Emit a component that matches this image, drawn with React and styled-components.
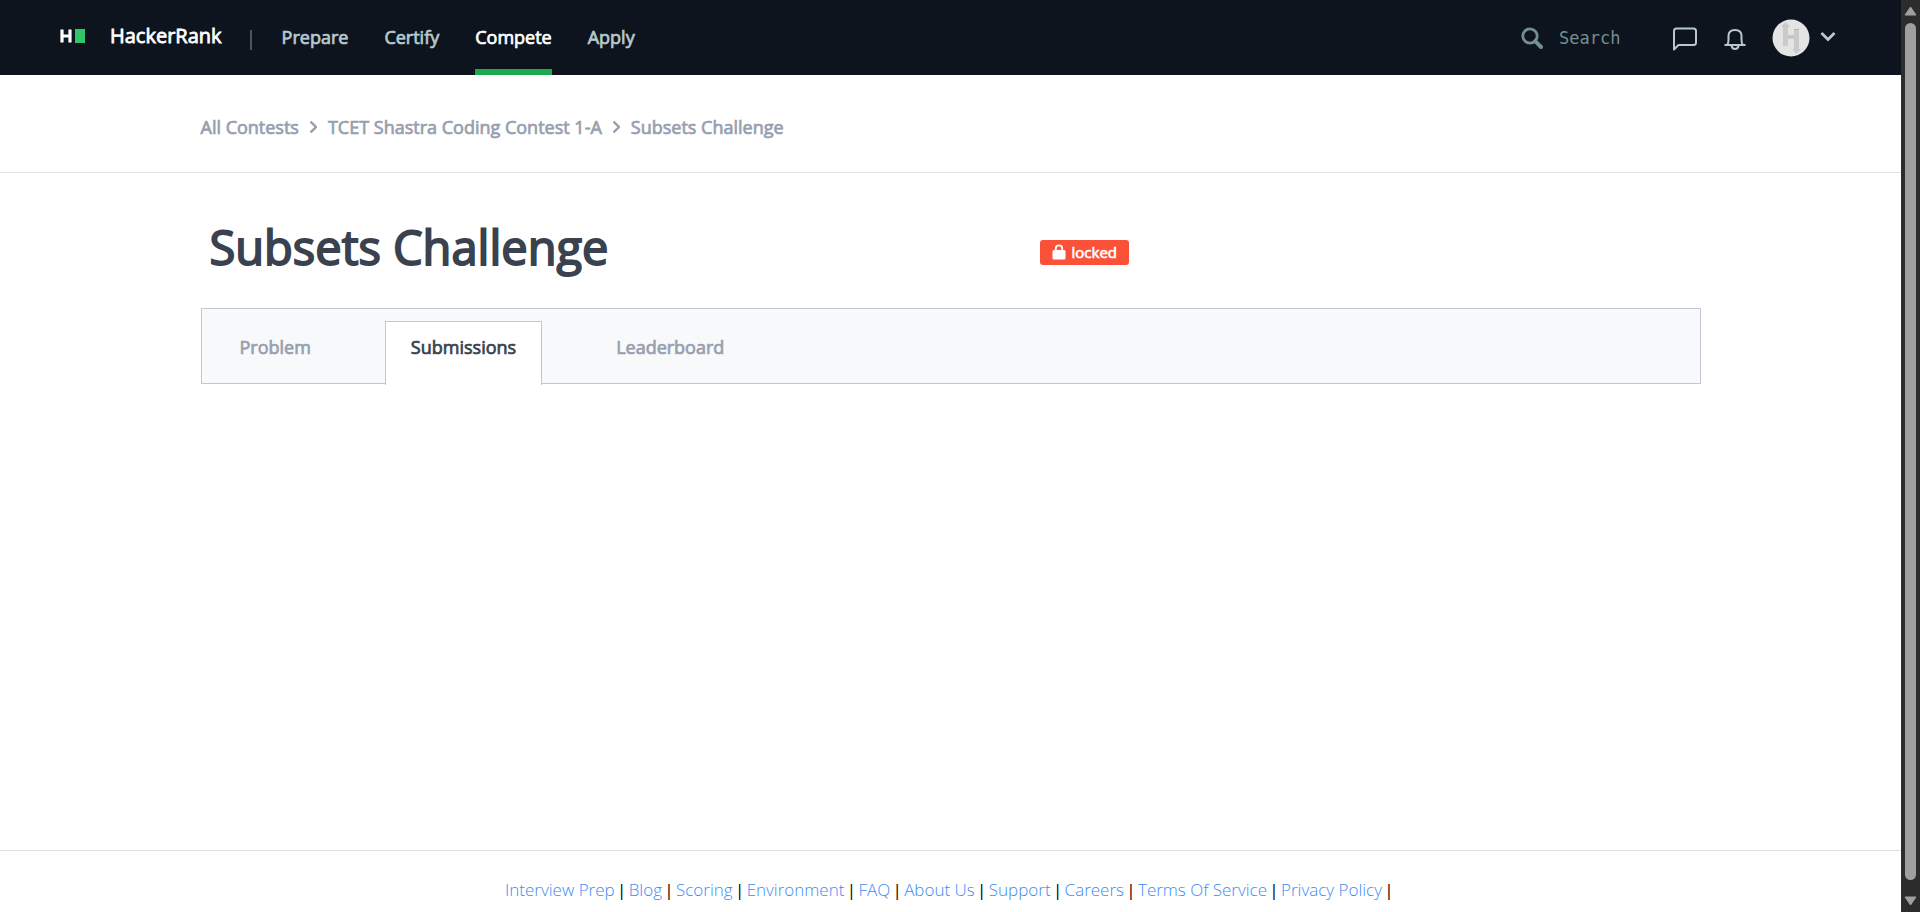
import React from "react";
import styled, { createGlobalStyle, css } from "styled-components";

const GlobalStyle = createGlobalStyle`
  *, *::before, *::after { box-sizing: border-box; }
  body {
    margin: 0;
    background: #fff;
    color: #39424e;
    font-family: "Open Sans", "Noto Sans", sans-serif;
    font-size: 18px;
    line-height: 24px;
  }
  a { color: inherit; text-decoration: none; }
  button { border: 0; padding: 0; background: none; color: inherit; font: inherit; cursor: pointer; }
`;

const thick = css`
  font-weight: 400;
  -webkit-text-stroke: 0.04em currentColor;
`;

const Window = styled.div`
  display: grid;
  grid-template-columns: minmax(0, 1fr) 19px;
  min-height: 100vh;
`;

const Page = styled.div`
  display: flex;
  flex-direction: column;
`;

const Header = styled.header`
  display: flex;
  align-items: stretch;
  justify-content: space-between;
  height: 75px;
  padding: 0 65px 0 60px;
  background: #0e141e;
  color: #b7c9cc;
`;

const HeaderGroup = styled.div`
  display: flex;
  align-items: center;
`;

const Brand = styled.a`
  display: flex;
  align-items: center;
  gap: 24px;
  padding-bottom: 3px;
  color: #fff;
  font-size: 20px;
  ${thick}
`;

const Divider = styled.span`
  width: 2px;
  height: 20px;
  margin: 4px 30px 0 28px;
  background: #4d545e;
`;

const Nav = styled.nav`
  display: flex;
  align-self: stretch;
  gap: 36px;
`;

const NavLink = styled.a`
  display: flex;
  align-items: center;
  padding-top: 5px;
  border-bottom: 6px solid ${(p) => (p.$active ? "#1ba94c" : "transparent")};
  color: ${(p) => (p.$active ? "#fff" : "#b7c9cc")};
  ${thick}
`;

const SearchBox = styled.label`
  display: flex;
  align-items: center;
  gap: 16px;
  width: 151px;
  color: #738f93;
`;

const SearchInput = styled.input`
  flex: 1;
  min-width: 0;
  padding: 0;
  border: 0;
  outline: 0;
  background: transparent;
  color: #fff;
  font: 17px/24px "DejaVu Sans Mono", monospace;
  &::placeholder { color: #738f93; opacity: 1; }
`;

const IconButton = styled.button`
  display: flex;
  align-items: center;
  margin-right: 26px;
`;

const Account = styled.button`
  display: flex;
  align-items: center;
  gap: 10px;
`;

const Crumbs = styled.nav`
  height: 98px;
  border-bottom: 1px solid #dfe1e8;
`;

const Container = styled.div`
  width: calc(100% - 64px);
  max-width: 1500px;
  margin: 0 auto;
`;

const CrumbList = styled(Container)`
  display: flex;
  align-items: center;
  gap: 11px;
  padding-top: 40px;
  color: #97a0af;
  ${thick}
`;

const Main = styled.main`
  flex: 1;
`;

const TitleRow = styled.div`
  display: grid;
  grid-template-columns: 839px auto;
  justify-content: start;
  align-items: center;
  padding: 42px 0 29px;
`;

const Title = styled.h1`
  margin: 0;
  padding-left: 9px;
  font-size: 47px;
  line-height: 64px;
  ${thick}
`;

const Badge = styled.span`
  display: flex;
  align-items: center;
  gap: 6px;
  height: 25px;
  margin-top: 10px;
  padding: 0 12px;
  border-radius: 3px;
  background: #fc5139;
  color: #fff;
  font-size: 15px;
  ${thick}
`;

const Tabs = styled.nav`
  display: flex;
  gap: 48px;
  height: 76px;
  padding: 12px 12px 0;
  border: 1px solid #c2c7d0;
  background: #f8f9fb;
`;

const Tab = styled.a`
  height: 64px;
  padding: 13px 25px 0;
  border: 1px solid transparent;
  color: #97a0af;
  ${thick}
  ${(p) => p.$active && css`
    border-color: #c2c7d0;
    border-bottom: 0;
    background: #fff;
    color: #39424e;
  `}
`;

const Footer = styled.footer`
  display: flex;
  flex-wrap: wrap;
  justify-content: center;
  padding: 27px 16px 10px;
  border-top: 1px solid #e0e0e0;
  color: #000;
  font-size: 17px;
`;

const FooterLink = styled.a`
  color: #3b8bf5;
  font-weight: 300;
`;

const Separator = styled.span`
  width: 14px;
  text-align: center;
`;

const Scrollbar = styled.div`
  position: sticky;
  top: 0;
  display: flex;
  flex-direction: column;
  align-items: center;
  gap: 7px;
  height: 100vh;
  padding: 6px 0;
  background: #2c2c2c;
`;

const Thumb = styled.div`
  flex: 1;
  width: 11px;
  border-radius: 6px;
  background: #9f9f9f;
`;

const ScrollArrow = styled.svg`
  margin-top: ${(p) => (p.$down ? "9px" : "0")};
`;

const LogoMark = () => (
  <svg width="26" height="14" viewBox="0 0 26 14" aria-hidden="true">
    <path d="M2 0.500V13.500M10 0.500V13.500M2 7H10" stroke="#fff" strokeWidth="3.200" fill="none" />
    <rect x="15" y="0" width="10" height="14" fill="#32c766" />
  </svg>
);

const SearchIcon = () => (
  <svg width="22" height="22" viewBox="0 0 22 22" fill="none" stroke="currentColor" aria-hidden="true">
    <circle cx="9" cy="9" r="7.200" strokeWidth="2.800" />
    <path d="M14.200 14.200L20 20" strokeWidth="4" strokeLinecap="round" />
  </svg>
);

const ChatIcon = () => (
  <svg width="26" height="26" viewBox="0 0 26 26" fill="none" stroke="currentColor" strokeWidth="2" aria-hidden="true">
    <path d="M2 24.500V6Q2 3.500 4.500 3.500H21.500Q24 3.500 24 6V17.500Q24 20 21.500 20H6.500Z" strokeLinejoin="round" />
  </svg>
);

const BellIcon = () => (
  <svg width="22" height="24" viewBox="0 0 22 24" fill="none" stroke="currentColor" strokeWidth="2" aria-hidden="true">
    <path d="M0.500 19H21.500M3 19Q4.500 17.500 4.500 14V10Q4.500 4 11 4T17.500 10V14Q17.500 17.500 19 19M7.500 19.500Q8 23 11 23T14.500 19.500" />
  </svg>
);

const Avatar = () => (
  <svg width="38" height="38" viewBox="0 0 38 38" aria-hidden="true">
    <circle cx="19" cy="19" r="18.500" fill="#e4e4e4" />
    <path d="M13.500 3L18 8H16V17H22V10H27V30H29L24.500 35L20 30H22V20H16V27H11V8H9Z" fill="#cacaca" />
    <path d="M16 17H22M22 10.500H27" stroke="#b5b5b5" />
  </svg>
);

const DownIcon = () => (
  <svg width="16" height="14" viewBox="0 0 16 14" fill="none" stroke="currentColor" strokeWidth="2.800" aria-hidden="true">
    <path d="M1.500 2L8 8.500L14.500 2" />
  </svg>
);

const CrumbArrow = () => (
  <svg width="7" height="14" viewBox="0 0 7 14" fill="none" stroke="currentColor" strokeWidth="2.400" aria-hidden="true">
    <path d="M0.500 1.500L6 7L0.500 12.500" />
  </svg>
);

const LockIcon = () => (
  <svg width="14" height="16" viewBox="0 0 14 16" aria-hidden="true">
    <rect x="0.500" y="6" width="13" height="9.500" rx="1.500" fill="#fff" />
    <path d="M3.800 7V4.500A3.200 3.200 0 0 1 10.200 4.500V7" fill="none" stroke="#fff" strokeWidth="1.800" />
  </svg>
);

const navItems = ["Prepare", "Certify", "Compete", "Apply"];
const crumbs = ["All Contests", "TCET Shastra Coding Contest 1-A", "Subsets Challenge"];
const tabs = ["Problem", "Submissions", "Leaderboard"];
const footerLinks = [
  "Interview Prep", "Blog", "Scoring", "Environment", "FAQ",
  "About Us", "Support", "Careers", "Terms Of Service", "Privacy Policy",
];

export default function App() {
  return (
    <>
      <GlobalStyle />
      <Window>
        <Page>
          <Header>
            <HeaderGroup>
              <Brand href="#"><LogoMark />HackerRank</Brand>
              <Divider />
              <Nav aria-label="Primary">
                {navItems.map((item) => (
                  <NavLink key={item} href="#" $active={item === "Compete"}>{item}</NavLink>
                ))}
              </Nav>
            </HeaderGroup>
            <HeaderGroup>
              <SearchBox>
                <SearchIcon />
                <SearchInput type="text" placeholder="Search" aria-label="Search" />
              </SearchBox>
              <IconButton aria-label="Messages"><ChatIcon /></IconButton>
              <IconButton aria-label="Notifications"><BellIcon /></IconButton>
              <Account aria-label="Account"><Avatar /><DownIcon /></Account>
            </HeaderGroup>
          </Header>
          <Crumbs aria-label="Breadcrumb">
            <CrumbList>
              {crumbs.map((crumb, i) => (
                <React.Fragment key={crumb}>
                  {i > 0 && <CrumbArrow />}
                  <a href="#">{crumb}</a>
                </React.Fragment>
              ))}
            </CrumbList>
          </Crumbs>
          <Main>
            <Container>
              <TitleRow>
                <Title>Subsets Challenge</Title>
                <Badge><LockIcon />locked</Badge>
              </TitleRow>
              <Tabs aria-label="Challenge">
                {tabs.map((tab) => (
                  <Tab key={tab} href="#" $active={tab === "Submissions"}>{tab}</Tab>
                ))}
              </Tabs>
            </Container>
          </Main>
          <Footer>
            {footerLinks.map((link) => (
              <React.Fragment key={link}>
                <FooterLink href="#">{link}</FooterLink>
                <Separator>|</Separator>
              </React.Fragment>
            ))}
          </Footer>
        </Page>
        <Scrollbar aria-hidden="true">
          <ScrollArrow width="13" height="10" viewBox="0 0 13 10">
            <path d="M6.500 1L12 9H1Z" fill="#9f9f9f" stroke="#9f9f9f" strokeLinejoin="round" />
          </ScrollArrow>
          <Thumb />
          <ScrollArrow $down width="13" height="10" viewBox="0 0 13 10">
            <path d="M6.500 9L12 1H1Z" fill="#9f9f9f" stroke="#9f9f9f" strokeLinejoin="round" />
          </ScrollArrow>
        </Scrollbar>
      </Window>
    </>
  );
}
